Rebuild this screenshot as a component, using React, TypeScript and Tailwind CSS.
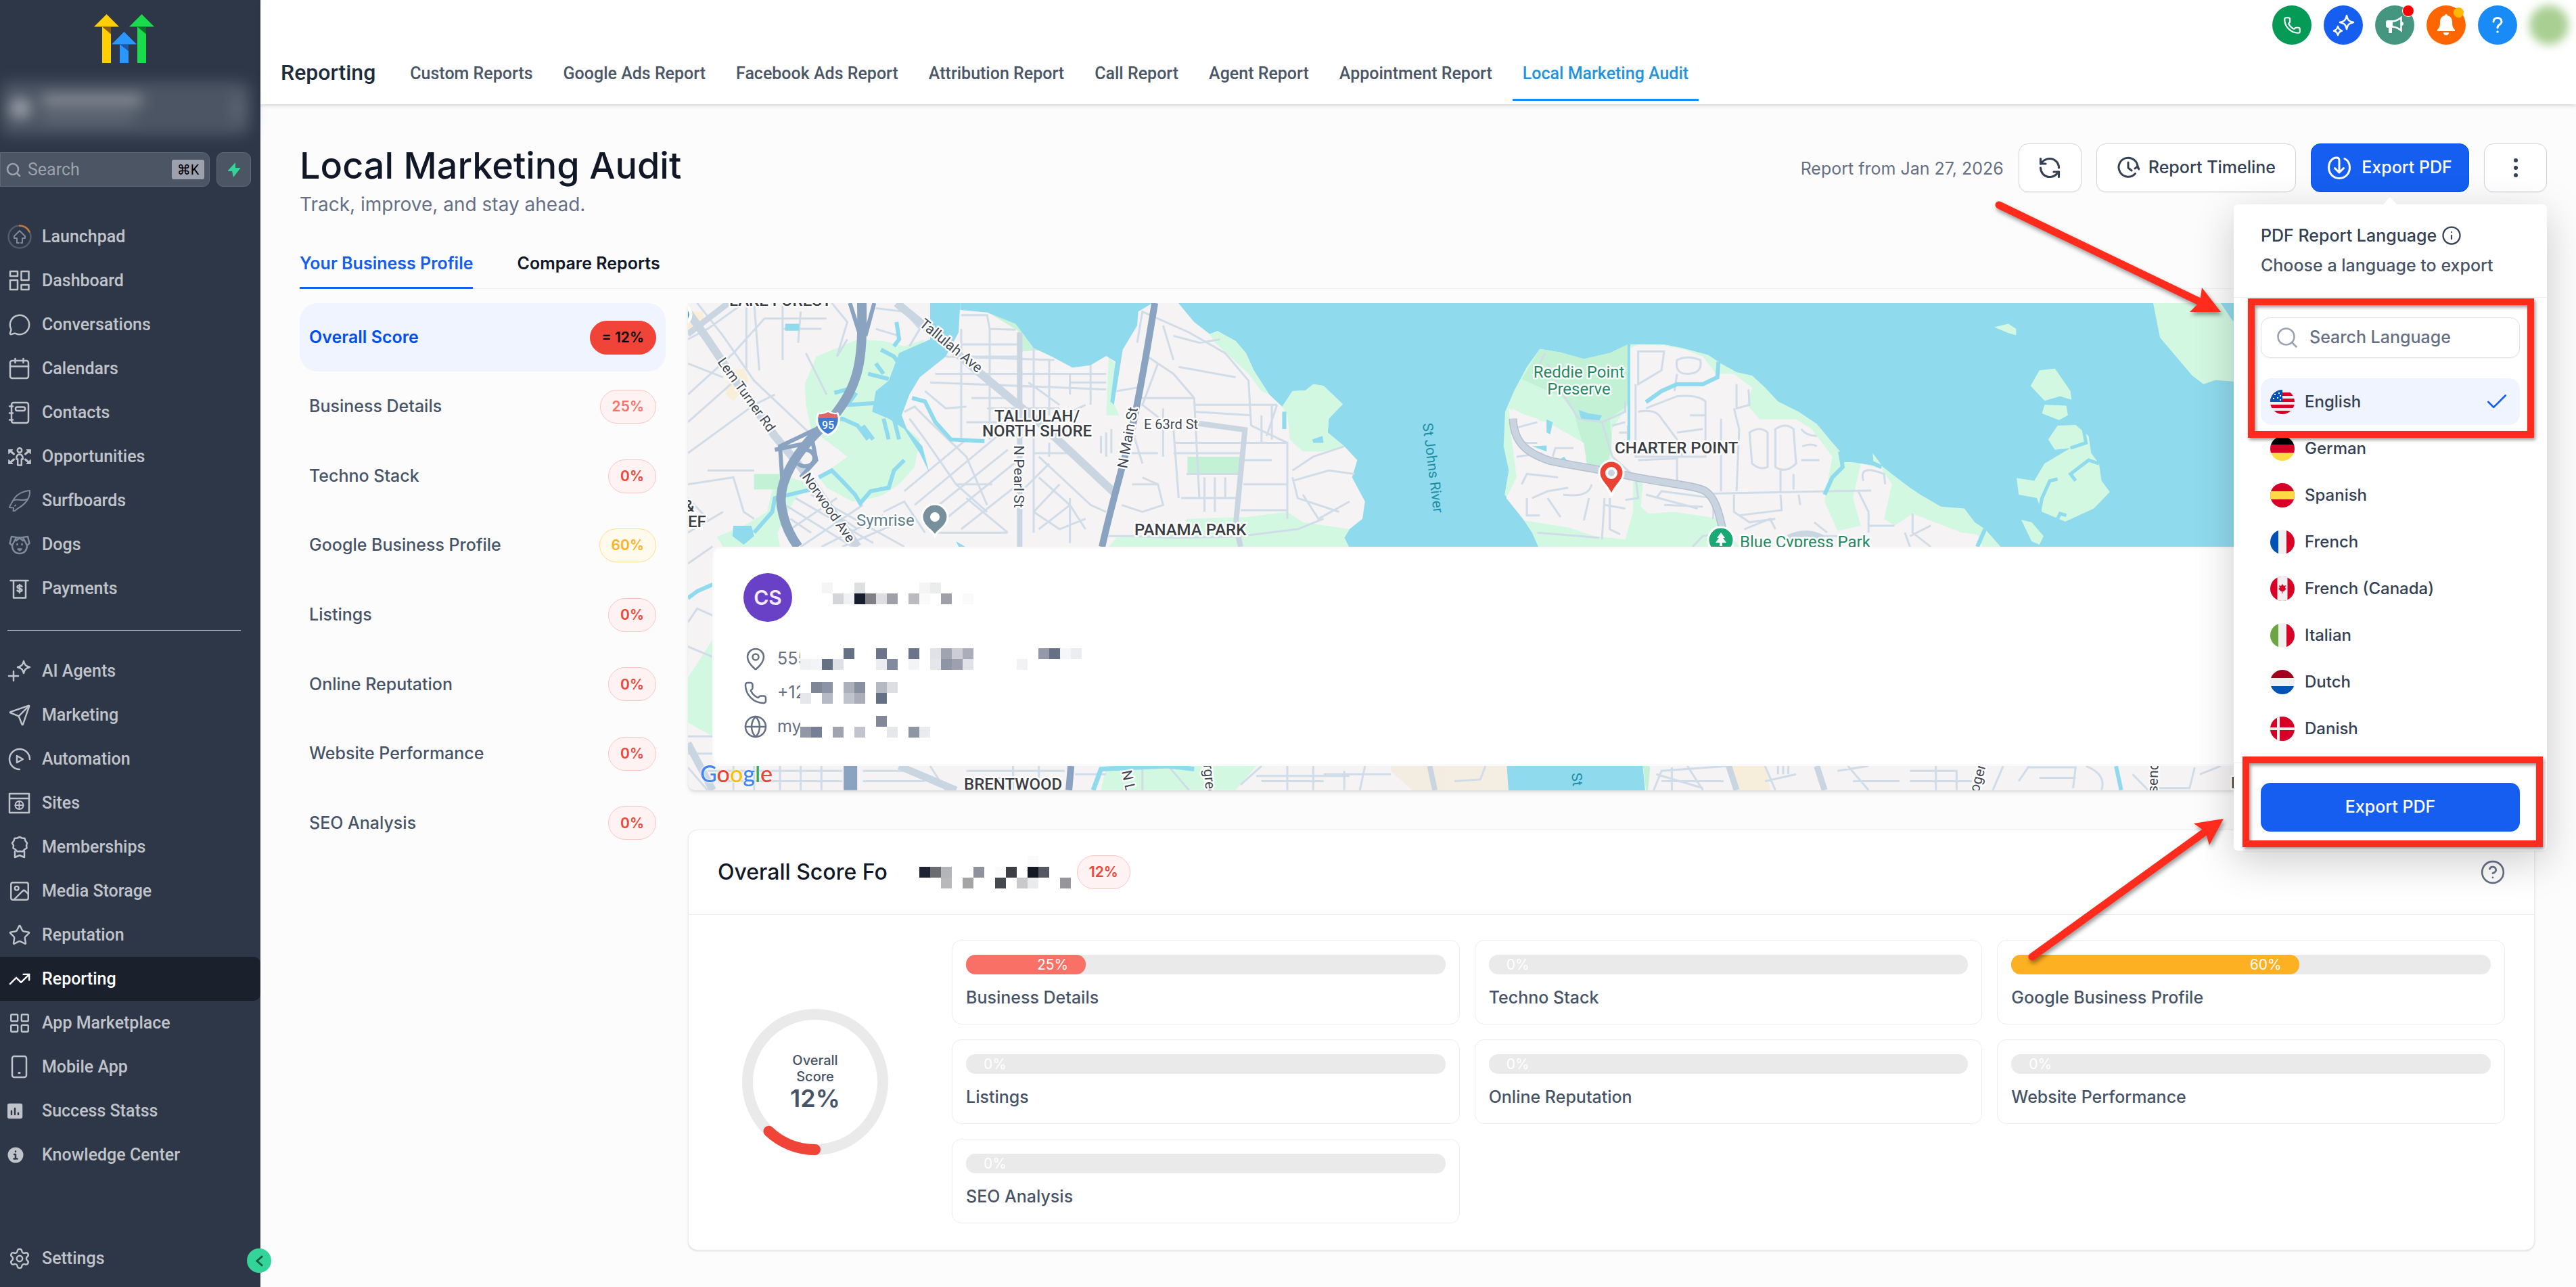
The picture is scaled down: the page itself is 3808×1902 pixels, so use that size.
import type { ReactNode } from 'react';
import clsx from 'clsx';
import {
  Check,
  CircleHelp,
  Globe,
  Image,
  Info,
  LayoutGrid,
  MapPin,
  MessageCircle,
  Phone,
  RefreshCw,
  Search,
  Send,
  Settings,
  Star,
  TrendingUp,
} from 'lucide-react';

//
// sidebar icons
//

interface GlyphProps {
  children: ReactNode;
  className?: string;
}

const Glyph = ({ children, className }: GlyphProps) => (
  <svg
    viewBox="0 0 36 36"
    className={clsx('size-9', className)}
    fill="none"
    stroke="currentColor"
    strokeWidth="2.5"
    strokeLinecap="round"
    strokeLinejoin="round"
    aria-hidden="true"
  >
    {children}
  </svg>
);

const LaunchpadIcon = () => (
  <Glyph className="text-[#7f8a99]">
    <circle cx="18" cy="18" r="16.5" stroke="#505b6b" />
    <path d="M18 1.5a16.5 16.5 0 0 1 14.5 9" stroke="#c27a3d" />
    <path d="m18 9-8 8v3h4v7h3M18 9l8 8v3h-4v7h-2" strokeWidth="2" />
  </Glyph>
);

const DashboardIcon = () => (
  <Glyph>
    <rect x="4" y="4" width="11" height="7" />
    <rect x="4" y="17" width="11" height="14" />
    <rect x="20.500" y="4" width="11" height="13" />
    <rect x="20.500" y="24" width="11" height="7" />
  </Glyph>
);

const CalendarIcon = () => (
  <Glyph>
    <rect x="4" y="6" width="27" height="26" rx="3" />
    <path d="M4 14.500h27M11.500 3v6M23.500 3v6" />
  </Glyph>
);

const ContactsIcon = () => (
  <Glyph>
    <rect x="6" y="3" width="25" height="30" rx="3" />
    <path d="M3 8.500h5M3 18.500h5M3 28.500h5" />
    <rect x="12" y="9.500" width="14" height="5.500" rx="2.500" />
  </Glyph>
);

const OpportunitiesIcon = () => (
  <Glyph>
    <circle cx="18" cy="8.500" r="3.200" />
    <path d="M18 14.500c-3.500 0-4.800 2-4.800 7h2v9h5.600v-9h2c0-5-1.300-7-4.800-7z" />
    <path d="M3 8.500 9.500 14M33 8.500 26.500 14M3 27.500 9.500 22M33 27.500 26.500 22" strokeWidth="3" />
    <path d="M2 7.500h6l-6 6zM34 7.500h-6l6 6zM2 28.500h6l-6-6zM34 28.500h-6l6-6z" fill="currentColor" strokeWidth="1" />
  </Glyph>
);

const SurfboardIcon = () => (
  <Glyph className="text-[#7f8a99]">
    <path d="M33 3C21 4 13 9 8 18c-2 4-4 6-5 10l6 .500-.500 4.500c3 .500 4-1.500 6-3C25 24 34 16 33 3z" strokeWidth="2" />
    <path d="M9 17.500c7-3 12 2 21-2M11 25.500l1-1" strokeWidth="2" />
  </Glyph>
);

const DogIcon = () => (
  <Glyph className="text-[#7f8a99]">
    <path d="M6 6 3.500 16 7 19c0 7 4 12 11 12s11-5 11-12l3.500-3L30 6c-4 0-6 1.500-12 1.500S10 6 6 6z" />
    <path d="M13 7.500 7 19M23 7.500 29 19M18 8l-5 4M18 8l5 4" />
    <path d="M14.500 17v1M21.500 17v1" />
    <path d="M15.500 24.500h5l-2.500 2z" fill="currentColor" />
  </Glyph>
);

const PaymentsIcon = () => (
  <Glyph>
    <path d="M4.500 6h26M9 6v25.500h18V6" />
    <path d="M21.500 15c-1.500-2.500-7-2-7 .500s7 2 7 4.500-5.500 3-7 .500M18 12v12" />
  </Glyph>
);

const AgentsIcon = () => (
  <Glyph>
    <path d="M24 3c1.500 6 3 7.500 9 9-6 1.500-7.500 3-9 9-1.500-6-3-7.500-9-9 6-1.500 7.500-3 9-9zM9 18v14M2 25h14" />
  </Glyph>
);

const AutomationIcon = () => (
  <Glyph>
    <path d="M18 33A15 15 0 1 1 33 18" />
    <path d="m14 13 9 5-9 5z" />
  </Glyph>
);

const SitesIcon = () => (
  <Glyph>
    <path d="M3 4h29v28H3zM3 11h29" />
    <circle cx="17.500" cy="21" r="6" strokeWidth="2" />
    <path d="M11.500 21h12M17.500 15v12" strokeWidth="2" />
  </Glyph>
);

const MembershipsIcon = () => (
  <Glyph>
    <path d="m18 3 3.500 1.500L25.500 5l1 3.500L29 12l-1 3.500.500 4-3.500 2-2.500 3-4-.500-4 .500-2.500-3-3.500-2 .500-4L7 12l2.500-3.500 1-3.500 4-.500z" />
    <path d="M11 24v9l7-3 7 3v-9" />
  </Glyph>
);

const MobileIcon = () => (
  <Glyph>
    <rect x="7" y="2" width="21" height="31" rx="3" />
    <path d="M17 26.500h1" strokeWidth="3" />
  </Glyph>
);

const StatsIcon = () => (
  <Glyph>
    <rect x="1" y="8" width="20" height="20" rx="2" fill="currentColor" />
    <path d="M6 18v5M11 14v9M16 21v2" stroke="#2e3748" />
  </Glyph>
);

const KnowledgeIcon = () => (
  <Glyph>
    <circle cx="12" cy="18" r="11.500" fill="currentColor" stroke="none" />
    <path d="M10 17h2v6M9.500 23.500h5M12 12.500v.500" stroke="#2e3748" />
  </Glyph>
);

//
// sidebar
//

interface NavEntry {
  label: string;
  icon: ReactNode;
  active?: boolean;
}

const lucide = 'mx-[1px] size-[34px] stroke-[1.700px]';

const primaryNav: NavEntry[] = [
  { label: 'Launchpad', icon: <LaunchpadIcon /> },
  { label: 'Dashboard', icon: <DashboardIcon /> },
  { label: 'Conversations', icon: <MessageCircle className={lucide} /> },
  { label: 'Calendars', icon: <CalendarIcon /> },
  { label: 'Contacts', icon: <ContactsIcon /> },
  { label: 'Opportunities', icon: <OpportunitiesIcon /> },
  { label: 'Surfboards', icon: <SurfboardIcon /> },
  { label: 'Dogs', icon: <DogIcon /> },
  { label: 'Payments', icon: <PaymentsIcon /> },
];

const secondaryNav: NavEntry[] = [
  { label: 'AI Agents', icon: <AgentsIcon /> },
  { label: 'Marketing', icon: <Send className={lucide} /> },
  { label: 'Automation', icon: <AutomationIcon /> },
  { label: 'Sites', icon: <SitesIcon /> },
  { label: 'Memberships', icon: <MembershipsIcon /> },
  { label: 'Media Storage', icon: <Image className={lucide} /> },
  { label: 'Reputation', icon: <Star className={lucide} /> },
  { label: 'Reporting', icon: <TrendingUp className={lucide} />, active: true },
  { label: 'App Marketplace', icon: <LayoutGrid className={lucide} /> },
  { label: 'Mobile App', icon: <MobileIcon /> },
  { label: 'Success Statss', icon: <StatsIcon /> },
  { label: 'Knowledge Center', icon: <KnowledgeIcon /> },
];

const NavLink = ({ label, icon, active }: NavEntry) => (
  <a
    href="#"
    aria-current={active ? 'page' : undefined}
    className={clsx(
      'flex h-[65px] items-center gap-[15px] pl-[11px] text-[25px] font-medium',
      active ? 'rounded-r-[10px] bg-[#1a202c] text-white' : 'text-[#c0c4ca]',
    )}
  >
    {icon}
    {label}
  </a>
);

const Logo = () => (
  <svg viewBox="0 0 89 72" className="mx-auto h-[72px] w-[89px]" role="img" aria-label="Logo">
    <path d="M0 18.500 18.500 0 37 18.500z" fill="#ffcf02" />
    <path d="M12 18.500h13V72H12z" fill="#ffcf02" />
    <path d="M12 18.500h13v11z" fill="#8a5d0c" />
    <path d="M52 18.500 70.500 0 89 18.500z" fill="#19db4b" />
    <path d="M64 18.500h13V72H64z" fill="#19db4b" />
    <path d="M64 18.500h13v11z" fill="#0b7024" />
    <path d="M26 44.500 44.500 26 63 44.500z" fill="#2a97ff" />
    <path d="M38 44.500h13V72H38z" fill="#2a97ff" />
    <path d="M38 44.500h13v10z" fill="#1a5aa6" />
  </svg>
);

const Sidebar = () => (
  <aside className="relative flex w-[385px] shrink-0 flex-col bg-[#2e3748] pt-[21px] pb-[10px] font-[Roboto,sans-serif]">
    <div className="mr-[18px]">
      <Logo />
    </div>

    <div className="mt-[27px] mr-[15px] flex h-20 items-center gap-4 rounded-2xl bg-[#4c5563] pl-[14px] blur-[10px]">
      <div className="size-8 rounded-full bg-[#9a9fa8]" />
      <div className="flex flex-col gap-3">
        <div className="h-4 w-[148px] bg-[#8d919b]" />
        <div className="h-3 w-[136px] bg-[#666e7a]" />
      </div>
      <div className="mr-3 ml-auto h-10 w-3 bg-[#626b78]" />
    </div>

    <div className="mt-[25px] flex h-[51px] gap-[10px]">
      <label className="flex w-[310px] items-center gap-[9px] rounded-r-[10px] border border-[#5f6876] bg-[#4c5563] pr-[7px] pl-[7px]">
        <Search className="size-6 shrink-0 stroke-[2.600px] text-[#9ca1ad]" />
        <input
          aria-label="Search"
          placeholder="Search"
          className="w-full min-w-0 bg-transparent text-[25px] placeholder:text-[#9ca1ad] focus:outline-none"
        />
        <kbd className="flex h-[29px] w-12 shrink-0 items-center justify-center rounded-[3px] bg-[#9ca1ad] font-[Roboto,'DejaVu_Sans',sans-serif] text-[20px] text-black">
          ⌘K
        </kbd>
      </label>
      <button
        type="button"
        aria-label="Quick actions"
        className="flex w-[51px] items-center justify-center rounded-[10px] border border-[#5f6876] bg-[#4c5563]"
      >
        <svg viewBox="0 0 18 22" className="h-[22px] w-[18px]" fill="#36d399">
          <path d="M11 0 0 12v1h6L8 22 18 9V8h-7z" />
        </svg>
      </button>
    </div>

    <nav aria-label="Main" className="mt-[41px]">
      {primaryNav.map((entry) => (
        <NavLink key={entry.label} {...entry} />
      ))}
    </nav>

    <hr className="mt-[29px] mr-[29px] ml-[11px] border-[#c5c9cf]" />

    <nav aria-label="Tools" className="mt-[27px]">
      {secondaryNav.map((entry) => (
        <NavLink key={entry.label} {...entry} />
      ))}
    </nav>

    <div className="mt-auto">
      <NavLink label="Settings" icon={<Settings className={lucide} />} />
    </div>

    <button
      type="button"
      aria-label="Collapse sidebar"
      className="absolute -right-4 bottom-[21px] flex size-9 items-center justify-center rounded-full bg-[#34d399]"
    >
      <svg viewBox="0 0 12 18" className="h-[17px] w-[11px]" fill="none" stroke="#0b5a43" strokeWidth="3">
        <path d="M11 1 2 9l9 8" />
      </svg>
    </button>
  </aside>
);

//
// header
//

const reportTabs = [
  'Custom Reports',
  'Google Ads Report',
  'Facebook Ads Report',
  'Attribution Report',
  'Call Report',
  'Agent Report',
  'Appointment Report',
  'Local Marketing Audit',
];

const roundButton = 'relative flex size-[58px] items-center justify-center rounded-full text-white';

const Header = () => (
  <header className="z-10 flex h-[154px] flex-col bg-white font-[Roboto,sans-serif] shadow-[0_2px_6px_rgba(0,0,0,0.16)]">
    <div className="flex justify-end gap-[18px] pt-2 pr-[11px]">
      <button type="button" aria-label="Call" className={clsx(roundButton, 'bg-[#059a55]')}>
        <Phone className="size-[27px] stroke-[1.900px]" />
      </button>
      <button type="button" aria-label="Assistant" className={clsx(roundButton, 'bg-[#155eef]')}>
        <svg viewBox="0 0 34 34" className="size-[34px]" fill="none" stroke="currentColor" strokeWidth="2.500" strokeLinejoin="round">
          <path d="M22 3c1.500 7 3.500 8.500 10 10-6.500 1.500-8.500 3-10 10-1.500-7-3.500-8.500-10-10 6.500-1.500 8.500-3 10-10zM9 19c1 4 2.500 5.500 6 6.500-3.500 1-5 2.500-6 6.500-1-4-2.500-5.500-6-6.500 3.500-1 5-2.500 6-6.500z" />
        </svg>
      </button>
      <button type="button" aria-label="Announcements" className={clsx(roundButton, 'bg-[#459680]')}>
        <svg viewBox="0 0 26 26" className="size-[26px]" fill="currentColor">
          <path d="M3 6h7v11H9v7a1 1 0 0 1-1 1H5a1 1 0 0 1-1-1v-7H3a3 3 0 0 1-3-3V9a3 3 0 0 1 3-3z" />
          <path d="M10 7.500C15 7 19 5 22.500 2v19C19 18 15 16 10 15.500" fill="none" stroke="currentColor" strokeWidth="2.500" />
          <path d="M23 8a3 3 0 0 1 0 6z" />
        </svg>
        <span className="absolute -top-[1px] right-0 size-[18px] rounded-full border border-white bg-[#ff0000]" />
      </button>
      <button type="button" aria-label="Notifications" className={clsx(roundButton, 'bg-[#ff6600]')}>
        <svg viewBox="0 0 28 32" className="h-8 w-7" fill="currentColor">
          <path d="M14 0a2 2 0 0 1 2 2c5 1 7 5 7 10 0 6 1 8 4 11v2H1v-2c3-3 4-5 4-11C5 7 7 3 12 2a2 2 0 0 1 2-2z" />
          <path d="M10 27h8a4 4 0 0 1-8 0z" />
        </svg>
        <span className="absolute top-[3px] right-[3px] size-[15px] rounded-full bg-[#ffb900]" />
      </button>
      <button type="button" aria-label="Help" className={clsx(roundButton, 'bg-[#188bf6]')}>
        <svg viewBox="0 0 16 24" className="h-6 w-4" fill="none" stroke="currentColor" strokeWidth="3" strokeLinecap="round">
          <path d="M2 7c0-3.500 2.500-5.500 6-5.500s6 2 6 5.500c0 4.500-6 4-6 9" />
          <path d="M8 22v.100" strokeWidth="3.500" />
        </svg>
      </button>
      <div className="size-[58px] rounded-full bg-[#a9cf92] blur-[7px]" />
    </div>

    <div className="flex h-[83px] gap-9 pl-[30px]">
      <h2 className="pt-[22px] text-[32px] leading-[38px] font-medium text-[#202b3c]">Reporting</h2>
      <nav aria-label="Reports" className="flex gap-[15px]">
        {reportTabs.map((tab, index) => (
          <a
            key={tab}
            href="#"
            className={clsx(
              'flex items-center border-b-3 px-[15px] pt-[6px] text-[25px] font-medium',
              index === reportTabs.length - 1 ? 'border-[#188bf6] text-[#2492dc]' : 'border-transparent text-[#4b5666]',
            )}
          >
            {tab}
          </a>
        ))}
      </nav>
    </div>
  </header>
);

//
// language menu
//

const flags: Record<string, ReactNode> = {
  English: (
    <>
      <path d="M0 0h36v36H0z" fill="#f0f0f0" />
      <path d="M0 4h36v5H0zM0 13h36v5H0zM0 22h36v5H0zM0 31h36v5H0z" fill="#d80027" />
      <path d="M0 0h18v18H0z" fill="#0052b4" />
      <path d="M6 6h2v2H6zM12 4h2v2h-2zM4 12h2v2H4zM10 11h2v2h-2zM14 8h2v2h-2zM14 14h2v2h-2z" fill="#f0f0f0" />
    </>
  ),
  German: (
    <>
      <path d="M0 0h36v12H0z" fill="#000" />
      <path d="M0 12h36v12H0z" fill="#d80027" />
      <path d="M0 24h36v12H0z" fill="#ffda44" />
    </>
  ),
  Spanish: (
    <>
      <path d="M0 0h36v36H0z" fill="#d80027" />
      <path d="M0 12h36v12H0z" fill="#ffda44" />
    </>
  ),
  French: (
    <>
      <path d="M0 0h12v36H0z" fill="#0052b4" />
      <path d="M12 0h12v36H12z" fill="#f0f0f0" />
      <path d="M24 0h12v36H24z" fill="#d80027" />
    </>
  ),
  'French (Canada)': (
    <>
      <path d="M0 0h36v36H0z" fill="#d80027" />
      <path d="M10.500 0h15v36h-15z" fill="#f0f0f0" />
      <path d="m18 11 2 3 3-1-1 4 2 1-4 4h-1.500v3h-1v-3H16l-4-4 2-1-1-4 3 1z" fill="#d80027" />
    </>
  ),
  Italian: (
    <>
      <path d="M0 0h12v36H0z" fill="#6da544" />
      <path d="M12 0h12v36H12z" fill="#f0f0f0" />
      <path d="M24 0h12v36H24z" fill="#d80027" />
    </>
  ),
  Dutch: (
    <>
      <path d="M0 0h36v12H0z" fill="#a2001d" />
      <path d="M0 12h36v12H0z" fill="#f0f0f0" />
      <path d="M0 24h36v12H0z" fill="#0052b4" />
    </>
  ),
  Danish: (
    <>
      <path d="M0 0h36v36H0z" fill="#d80027" />
      <path d="M10 0h4v36h-4zM0 16h36v4H0z" fill="#f0f0f0" />
    </>
  ),
};

const languages = ['English', 'German', 'Spanish', 'French', 'French (Canada)', 'Italian', 'Dutch', 'Danish'];

const Highlight = ({ className }: { className: string }) => (
  <div
    className={clsx(
      'pointer-events-none absolute border-10 border-[#ff2b1c] shadow-[2px_3px_5px_rgba(0,0,0,0.4),inset_2px_3px_5px_rgba(0,0,0,0.4)]',
      className,
    )}
  />
);

const LanguageMenu = () => (
  <div className="absolute top-[90px] -right-[115px] z-20 w-[463px] rounded-[6px] bg-white pb-[28px] shadow-[0_16px_60px_rgba(0,0,0,0.2)]">
    <svg viewBox="0 0 22 12" className="absolute -top-[11px] left-[220px] h-3 w-[22px]" fill="#fff">
      <path d="M11 0 22 12H0z" />
    </svg>

    <div className="border-b border-[#eceef1] px-10 pt-6 pb-[25px] text-[25px] leading-[44px]">
      <p className="flex items-center gap-[7px] font-medium text-[#344054]">
        PDF Report Language <Info className="size-[30px] stroke-[1.800px]" />
      </p>
      <p className="text-[#475467]">Choose a language to export</p>
    </div>

    <div className="px-10 pt-[29px]">
      <label className="flex h-[60px] items-center gap-[15px] rounded-[14px] border border-[#dfe1e6] pl-[20px] shadow-xs">
        <Search className="size-9 shrink-0 stroke-[1.700px] text-[#98a2b3]" />
        <input
          aria-label="Search Language"
          placeholder="Search Language"
          className="w-full min-w-0 bg-transparent text-[25px] placeholder:text-[#667085] focus:outline-none"
        />
      </label>

      <ul className="mt-[30px]">
        {languages.map((language, index) => (
          <li key={language}>
            <button
              type="button"
              aria-pressed={index === 0}
              className={clsx(
                'flex h-[69px] w-full items-center gap-[15px] rounded-[16px] pr-[15px] pl-[14px] text-[24px] font-medium text-[#344054]',
                index === 0 && 'bg-[#eff4ff]',
              )}
            >
              <svg viewBox="0 0 36 36" className="size-9 rounded-full" aria-hidden="true">
                {flags[language]}
              </svg>
              {language}
              {index === 0 && <Check className="ml-auto size-[38px] stroke-[1.700px] text-[#155eef]" />}
            </button>
          </li>
        ))}
      </ul>
    </div>

    <div className="mt-4 border-t border-[#eceef1] px-10 pt-[29px]">
      <button type="button" className="h-[72px] w-full rounded-[14px] bg-[#155eef] text-[25px] font-medium text-white">
        Export PDF
      </button>
    </div>

    <Highlight className="top-[139px] right-[19px] left-[21px] h-[206px]" />
    <Highlight className="right-[6px] bottom-[5px] left-[13px] h-[134px]" />
  </div>
);

//
// page title and actions
//

const outlineButton =
  'flex h-[72px] items-center justify-center rounded-[14px] border border-[#d0d5dd] bg-white text-[#344054] shadow-xs';

const TitleRow = () => (
  <div className="flex items-start justify-between">
    <div>
      <h1 className="text-[54px] leading-[66px] font-medium text-[#101828]">Local Marketing Audit</h1>
      <p className="mt-1 text-[28px] leading-10 text-[#667085]">Track, improve, and stay ahead.</p>
    </div>

    <div className="flex items-center gap-[22px] text-[25px] font-medium">
      <span className="pt-1 font-normal text-[#667085]">Report from Jan 27, 2026</span>
      <button type="button" aria-label="Refresh" className={clsx(outlineButton, 'w-[93px]')}>
        <RefreshCw className="size-[36px] -scale-x-100 stroke-[2.100px]" />
      </button>
      <button type="button" className={clsx(outlineButton, 'gap-[13px] px-[29px]')}>
        <svg viewBox="0 0 34 34" className="size-[34px]" fill="none" stroke="currentColor" strokeWidth="3" strokeLinecap="round" strokeLinejoin="round">
          <path d="M27.500 25.500A14 14 0 1 1 31 17" />
          <path d="M17 9v8l5 4M27 18l4-3 2 4" />
        </svg>
        Report Timeline
      </button>
      <div className="relative">
        <button
          type="button"
          aria-expanded="true"
          className="flex h-[72px] w-[234px] items-center justify-center gap-[16px] rounded-[14px] border border-[#004eeb] bg-[#155eef] text-white"
        >
          <svg viewBox="0 0 34 34" className="size-[34px]" fill="none" stroke="currentColor" strokeWidth="3" strokeLinecap="round" strokeLinejoin="round">
            <path d="M25 3.500C30 6 32.500 11 32.500 17a15.500 15.500 0 1 1-31 0C1.500 9 6 2 13 2c3 0 4 2 4 4v17M10.500 17.500 17 24l6.500-6.500" />
          </svg>
          Export PDF
        </button>
        <LanguageMenu />
      </div>
      <button type="button" aria-label="More" className={clsx(outlineButton, 'w-[93px]')}>
        <svg viewBox="0 0 6 28" className="h-7 w-[6px]" fill="currentColor">
          <circle cx="3" cy="3" r="3" />
          <circle cx="3" cy="14" r="3" />
          <circle cx="3" cy="25" r="3" />
        </svg>
      </button>
    </div>
  </div>
);

//
// score list
//

const toneStyles = {
  solid: 'border-[#f04438] bg-[#f04438] text-black',
  low: 'border-[#fac5c0] bg-[#fef3f2] text-[#f97066]',
  none: 'border-[#fac5c0] bg-[#fef3f2] text-[#f04438]',
  mid: 'border-[#fedf89] bg-[#fffaeb] text-[#fdb022]',
};

interface ScoreBadgeProps {
  label: string;
  tone: keyof typeof toneStyles;
}

const ScoreBadge = ({ label, tone }: ScoreBadgeProps) => (
  <span
    className={clsx(
      'flex h-[50px] items-center rounded-full border px-[17px] text-[21px] font-semibold',
      toneStyles[tone],
    )}
  >
    {label}
  </span>
);

const sections: { name: string; score: string; tone: keyof typeof toneStyles }[] = [
  { name: 'Overall Score', score: '= 12%', tone: 'solid' },
  { name: 'Business Details', score: '25%', tone: 'low' },
  { name: 'Techno Stack', score: '0%', tone: 'none' },
  { name: 'Google Business Profile', score: '60%', tone: 'mid' },
  { name: 'Listings', score: '0%', tone: 'none' },
  { name: 'Online Reputation', score: '0%', tone: 'none' },
  { name: 'Website Performance', score: '0%', tone: 'none' },
  { name: 'SEO Analysis', score: '0%', tone: 'none' },
];

const SectionList = () => (
  <ul className="flex h-[819px] w-[541px] shrink-0 flex-col justify-between">
    {sections.map((section, index) => (
      <li key={section.name}>
        <button
          type="button"
          className={clsx(
            'flex h-[101px] w-full items-center justify-between rounded-[26px] px-[14px] text-[25px]',
            index === 0 ? 'bg-[#eff4ff] font-semibold text-[#004eeb]' : 'font-medium text-[#475467]',
          )}
        >
          {section.name}
          <ScoreBadge label={section.score} tone={section.tone} />
        </button>
      </li>
    ))}
  </ul>
);

//
// map
//

const street = { fill: 'none', stroke: '#d0dce7', strokeWidth: 3 };
const avenue = { fill: 'none', stroke: '#c9d5e1', strokeWidth: 8 };
const highway = { fill: 'none', stroke: '#8aa3c1', strokeWidth: 13 };

const halo = { paintOrder: 'stroke', stroke: '#fff', strokeWidth: 5, strokeLinejoin: 'round' } as const;

const WestShore = () => (
  <g transform="translate(-17 -18) scale(0.7653 0.5102)" className="[&_path]:[vector-effect:non-scaling-stroke]">
    <path d="M0 0H950L1000 90 1030 125 1045 116 1080 145 1100 180 1115 230 1145 300 1170 335 1190 290 1215 288 1230 270 1250 275 1287 328 1260 370 1258 410 1290 450 1315 490 1305 540 1330 610 1325 660 1300 690 1290 715 1300 745V1360H1603V1500H0Z" fill="#f5f3f4" />

    {/* parks */}
    <path d="M270 190 350 140 400 145 440 160 480 140 440 260 380 330 440 390 470 430 460 510 430 560 400 590 380 600 340 610 290 570 275 540 330 480 260 400 250 330 248 270Z" fill="#d3f8e2" />
    <path d="M150 530 200 530 260 560 230 600 215 640 195 700 200 741 90 741 78 712 130 680 175 640 185 575 150 575Z" fill="#d3f8e2" />
    <path d="M150 530H200V575H150Z" fill="#c3f1d5" />
    <path d="M605 65 655 92 700 172 665 175 660 115Z" fill="#c9f3d9" />
    <path d="M1030 125 1045 116 1080 145 1100 180 1115 230 1145 300 1130 290 1105 240 1070 190 1040 150Z" fill="#d3f8e2" />
    <path d="M1170 335 1190 290 1215 288 1230 270 1250 275 1287 328 1260 370 1258 410 1290 450 1250 465 1210 465 1185 430 1180 360Z" fill="#d3f8e2" />
    <path d="M987 480H1088V530H987Z" fill="#c3f1d5" />
    <path d="M835 190 850 215 840 310 855 360 830 360Z" fill="#d3f8e2" />
    <path d="M835 741 850 715 980 700 985 660 1100 655 1180 640 1210 670 1300 690 1290 715 1300 745Z" fill="#d3f8e2" />
    <path d="M22 1120 70 1010V1290L22 1250Z" fill="#d3f8e2" />
    <path d="M820 1446 830 1376H1120L1080 1446Z" fill="#d3f8e2" />
    <path d="M1380 1360H1603V1500H1460L1380 1390Z" fill="#f2ede0" />
    <path d="M22 60 50 60 55 100 22 130ZM100 230 130 225 140 260 110 320 95 300Z" fill="#f9efd9" />

    {/* street grid */}
    <path
      {...street}
      d="M40 35 90 130 150 260 270 430M130 35 60 110 22 140M135 35V230M205 35V200M205 110H280M150 35 160 230M240 60 235 150M22 300 110 180 170 80 290 80M22 380 120 250M22 470 150 330 190 300M22 210 90 250M60 520H150M22 560 110 540 130 640 150 660M22 600 60 660M22 700 90 640M250 180 270 240 290 300M300 35 330 90 310 190 330 140M385 50 440 60 470 110 450 160M385 110 430 130"
    />
    <path
      {...street}
      d="M550 70H600L605 110 655 112M550 110V430M550 155H660M550 190H660M605 110V430M690 120V700M520 190 730 200M500 240H830M490 265 830 285M480 290 520 340 560 335M720 200V360M760 240V300M800 215V330M760 265H830M570 310H640M600 340H740M680 265 740 330M720 380 790 330M560 380 640 380"
    />
    <path
      {...street}
      d="M440 350 460 335 490 380 560 480 600 620M450 370 480 430 540 560 600 640M490 640 640 460M520 660 660 490M550 690 660 560M460 620 620 420M440 580 560 430M500 700 640 700M400 640 440 610 480 700M560 600 640 700M540 560 610 560M700 480 800 620 830 640M700 540 760 620 790 690M720 500 660 590M740 560 690 640M760 600V730M700 690 760 620M690 640 740 690 790 660M690 470H760M820 420V470M830 410V480M840 400V470M720 440V480"
    />
    <path
      {...street}
      d="M890 150 900 60 990 120 1060 180 1105 260 1110 390M910 190 960 240 1000 310 1010 600M940 100 960 200M960 130 1010 150 1050 140M970 220 1080 250M930 210 900 330 960 400 970 600M890 280 850 290M890 310H1000M1000 330H1160M1000 350 1110 360M940 340V480M960 440H1180M960 470H1090M985 530H1090M975 600H1085M1110 390 1180 440V660M1130 360V440M1150 330V430M1160 330 1140 420M1190 520 1230 480 1290 450M1190 550 1260 520 1310 530M1210 590 1240 660 1300 610M1190 540 1200 600 1280 640M880 400 900 500M900 540 930 560 940 620 900 640 860 620M880 560H930M870 470H930M1020 540V640M1040 540V640M1060 540V600M1090 490H1150M1095 560H1180M1090 635H1180M820 710H880L960 715 1080 712 1200 690 1250 660"
    />
    <path
      {...street}
      d="M210 620 340 741M230 600 380 730M260 590 440 741M210 700 310 600M240 741 360 620M280 741 400 650M320 741 430 670M220 660 260 700M300 640 350 690M22 790 70 740M22 960 40 920 70 940M22 1030 70 1060M22 1290H70M22 1340H70M22 1380 60 1446M60 1390H320M80 1420H320M110 1376V1446M150 1376V1446M200 1376V1446M240 1376V1446M280 1376V1446M360 1390H440M360 1420H480M490 1376 520 1446M560 1390H750M560 1410H650M650 1376V1446M700 1376V1446M770 1400H830M900 1376V1446M950 1376 990 1446M1090 1430 1130 1376M1130 1420H1250M1180 1376V1446M1230 1376V1446M1250 1400H1380M1330 1376 1320 1446M1290 1390V1446M1120 1405H1300"
    />

    {/* creeks */}
    <path d="M490 35H548L545 120 520 190 470 250 450 300 435 360 445 400 475 450 488 525 470 470 440 400 410 370 378 350 385 290 410 260 430 180 490 140Z" fill="#90daee" />
    <path
      d="M425 90 430 140 420 160M395 170 420 190 430 210M385 210 400 240M370 240 410 255M305 295 330 285 345 300 330 330 385 325M300 380 320 370 350 390 370 430M360 390 380 430M400 370 410 430M420 370 430 430M455 310 480 320 500 380 530 430 595 435M275 540 300 520 320 550 345 590 355 615 375 580 410 570 420 520 440 490M150 700 185 640 190 600 260 575M22 890 40 870 70 850"
      fill="none"
      stroke="#90daee"
      strokeWidth="6"
    />
    <path d="M210 95H237V115H210ZM110 680 145 680 150 710 130 735 108 710ZM1228 430 1248 420 1250 440 1230 440ZM1170 350 1178 350 1178 400 1170 400ZM540 725 558 741H545Z" fill="#90daee" />
    <path d="M548 35V55L600 62 655 95 690 165 725 190 765 222 800 215 830 188 848 205 838 320 845 330 862 170 890 100 892 60 925 30Z" fill="#90daee" />
    <path d="M805 1446 820 1385 950 1376 1000 1385" fill="none" stroke="#90daee" strokeWidth="7" />

    {/* arterials */}
    <path {...avenue} strokeWidth="12" d="M425 35 470 90 580 230 700 380 850 590" />
    <path {...avenue} strokeWidth="12" d="M22 60 60 140 100 230 190 420 240 510 350 741" />
    <path {...avenue} strokeWidth="9" d="M100 35 22 125" />
    <path {...avenue} d="M663 120V741M1000 382 1098 402 1080 680 1090 741" />
    <path {...avenue} strokeWidth="11" d="M430 1376 540 1446M22 1310 70 1446" />
    <path {...avenue} d="M1455 1376 1465 1446" />
    <path {...highway} strokeWidth="6" d="M335 35 355 130M382 35 365 130M270 400 200 450 205 560M262 430 270 490 240 540M255 440 190 460M250 460A18 24 0 1 1 235 500" />
    <path {...highway} strokeWidth="14" d="M358 35C360 200 355 270 300 370 230 460 190 560 205 640 210 680 220 710 235 741" />
    <path {...highway} strokeWidth="10" d="M924 35C910 160 900 260 880 400 860 520 840 620 822 741M762 1376 758 1446" />
    <path {...highway} strokeWidth="20" d="M336 1376V1446" />
  </g>
);

const EastShore = () => (
  <g transform="translate(1133 -18) scale(0.7653 0.5102)" className="[&_path]:[vector-effect:non-scaling-stroke]">
    <path d="M165 168 205 178 250 197 300 180 335 155 405 155 440 165 490 185 515 210 545 235 575 245 600 280 625 320 665 350 700 385 725 430 745 465 745 490 785 500 810 505 808 470 828 510 845 530 880 570 900 590 940 625 985 630 1005 670 1025 690 1055 741H162L150 700 128 650 97 590 105 520 95 450 98 350 115 290 140 220Z" fill="#d3f8e2" />
    <path d="M165 168 205 178 250 197 300 180 335 155V330L300 370 305 450 290 520 245 500 255 480 230 350 210 310 130 255Z" fill="#c3f1d5" />
    <path d="M340 165 355 155 405 158 445 170 480 190 505 240 540 240 575 280 565 330 590 372 660 372 690 400 715 450 730 480 720 560 715 610 740 695 785 680 770 600 785 500 825 515 845 560 830 660 850 680 885 645 980 700 1010 705 1020 741H550L515 660 425 640 375 645 360 625 365 545 345 540 345 640 330 720 270 710 220 685 135 665 100 600 120 540 110 420 105 340 130 365 180 380 250 440 255 500 300 520 305 400 340 320Z" fill="#f5f3f4" />
    <path d="M112 340 130 355 160 370 185 415 245 440 255 495 200 495 140 460 110 380Z" fill="#f5f3f4" />

    <path
      {...street}
      d="M355 175H405L400 230 355 270ZM430 200Q450 185 475 200 480 240 450 240 425 240 430 200ZM430 240 425 290M350 270V480H485V320Q470 300 430 305L370 340M355 350Q390 340 400 370L430 430 440 480M485 360 455 360M430 410 480 400M515 370V580M550 400 545 580M545 270V340L570 330 568 285M540 340 550 400M570 410Q590 390 605 410V510Q590 520 575 500ZM620 400Q640 380 655 400L660 500Q640 530 620 510ZM630 520V580M655 530V575M670 400Q680 420 700 420M672 450Q690 440 700 450M670 490 705 490"
    />
    <path
      {...street}
      d="M355 490 430 485V560M500 587 720 580 805 578M790 550Q780 500 830 530L832 560M540 590V640L570 670 620 660M550 650 632 635 630 590M560 690 610 660 620 690M665 590 668 620M780 580 800 640V700M800 680H850M885 645V700L920 741M880 710 920 680M150 600 180 580 220 570M130 560 140 530 200 540M140 600 140 650 165 650M180 600 205 655M210 590Q260 600 265 560M260 600 250 665M290 600 285 720M290 620 330 630M300 600 300 690 320 705M285 380 305 480 350 540 355 600 330 605M370 590 470 630M390 600 400 580 500 600M430 570 440 550M405 620 480 625M120 440 160 440M120 480 170 470M190 480 195 455 230 455M160 700 280 715M110 400 160 380M335 390V440M305 390 330 380M318 410H335M650 710 760 710M695 670 720 700M880 741 870 700"
    />
    <path {...street} d="M165 210 175 180M180 210 210 300 240 370 285 380 330 350V320M500 620V660M460 741 480 710 520 700" />
    <path d="M337 155V440" stroke="#90daee" strokeWidth="4" />
    <path
      d="M510 205 508 250 480 270 430 270 400 290 370 322M745 465 750 510 730 540 715 590M745 490 785 490 810 500 825 510M1025 690 1010 741"
      fill="none"
      stroke="#90daee"
      strokeWidth="6"
    />
    <path d="M240 345 260 355 285 360 280 375 245 370ZM178 372 190 380 185 415 178 410ZM150 450 178 448V465ZM200 490 212 480 220 497 205 500Z" fill="#90daee" />

    <path d="M113 370C115 440 140 470 185 492 260 515 300 520 340 537 420 560 470 565 485 580 505 600 512 650 518 690" fill="none" stroke="#b3c0cf" strokeWidth="12" />
    <path d="M113 370C115 440 140 470 185 492 260 515 300 520 340 537 420 560 470 565 485 580 505 600 512 650 518 690" fill="none" stroke="#c9d4e0" strokeWidth="9" />
    <path {...avenue} strokeWidth="9" d="M645 715Q680 690 710 715" />

    {/* marsh islands */}
    <path d="M1043 105 1070 95 1085 110V128L1070 122Z" fill="#d3f8e2" />
    <path d="M1113 275 1130 230 1160 225 1190 290 1192 315 1170 305 1140 318Z" fill="#d3f8e2" />
    <path d="M1135 355 1140 330 1182 332 1185 360 1168 374Z" fill="#d3f8e2" />
    <path d="M1147 430 1165 390 1200 388 1225 420 1230 470 1245 500 1250 550 1266 582 1235 630 1180 668 1135 640 1125 600 1090 590 1086 542 1120 550 1140 500 1190 455 1160 460Z" fill="#d3f8e2" />
    <path d="M1095 663 1115 670 1138 710 1130 735 1115 725Z" fill="#d3f8e2" />
    <path d="M1349 30H1478L1505 90V262L1470 258 1447 270 1425 245 1363 135Z" fill="#d3f8e2" />
    <path d="M1215 400 1220 440 1190 455M1245 500 1225 490 1190 530 1200 550M1165 545 1150 550 1135 600 1130 640M1165 660 1170 645 1182 650" fill="none" stroke="#90daee" strokeWidth="5" />

    {/* south bank */}
    <path d="M-20 1350H100L107 1500H-20Z" fill="#f4eee2" />
    <path d="M362 1350H2100V1500H372Z" fill="#f5f3f4" />
    <path d="M362 1350 378 1380 374 1446H370Z" fill="#c3f1d5" />
    <path d="M535 1376H602L610 1446H550Z" fill="#f6eedb" />
    <path
      {...street}
      d="M0 1420 50 1415 60 1376M385 1446 400 1390 530 1376M390 1400 480 1440M420 1380V1446M450 1376 480 1446M400 1420H520M600 1376 620 1446M625 1376V1400M635 1376V1400M645 1376V1400M600 1420 660 1400M760 1376 800 1446M740 1390 800 1376M770 1420H860M880 1390H970V1446M930 1376V1446M880 1420H1000M1060 1376 1040 1446M1110 1380H1200L1195 1440M1090 1420 1110 1376M1220 1376Q1260 1400 1250 1446M1130 1410H1200M1310 1400 1340 1446M1360 1440 1420 1440 1430 1380M1440 1400 1480 1376"
    />
    <path {...avenue} strokeWidth="9" d="M530 1376 545 1446M700 1376 715 1446" />
    <path d="M1278 1376 1288 1446" stroke="#90daee" strokeWidth="6" />
  </g>
);

const MapLabels = () => (
  <g fontFamily="Roboto, sans-serif" fontSize="24" fontWeight="500" fill="#3a3e44" {...halo}>
    <text x="61" y="4">LAKE FOREST</text>
    <g textAnchor="middle">
      <text x="516" y="175">TALLULAH/</text>
      <text x="516" y="197">NORTH SHORE</text>
    </g>
    <text x="660" y="343">PANAMA PARK</text>
    <text x="1370" y="222">CHARTER POINT</text>
    <text x="408" y="719">BRENTWOOD</text>
    <text x="0" y="331">EF</text>
    <text x="-6" y="308">&amp;</text>
    <text x="2281" y="717">N</text>

    <g fontSize="21" fontWeight="400" fill="#3f4753">
      <text x="674" y="186" fontSize="20">E 63rd St</text>
      <text transform="translate(649 245) rotate(-80)">N Main St</text>
      <text transform="translate(482 210) rotate(90)">N Pearl St</text>
      <text transform="translate(341 33) rotate(39)">Tallulah Ave</text>
      <text transform="translate(43 87) rotate(54)" fontSize="20">Lem Turner Rd</text>
      <text transform="translate(168 257) rotate(55)" fontSize="20">Norwood Ave</text>
      <text transform="translate(641 692) rotate(78)">N L</text>
      <text transform="translate(762 682) rotate(85)">rgree</text>
      <text transform="translate(1908 724) rotate(-75)">oger</text>
      <text transform="translate(2172 724) rotate(-88)">send</text>
    </g>

    <text x="249" y="329" fontWeight="400" fill="#5f7c8a">Symrise</text>

    <g fill="#1f8a62" fontWeight="400">
      <text x="1317" y="110" textAnchor="middle">Reddie Point</text>
      <text x="1317" y="135" textAnchor="middle">Preserve</text>
      <text x="1555" y="361">Blue Cypress Park</text>
    </g>

    <g fill="#1c8fa3" fontSize="21" fontWeight="400" stroke="none">
      <text transform="translate(1086 178) rotate(83)">St Johns River</text>
      <text transform="translate(1306 695) rotate(83)">St</text>
    </g>
  </g>
);

const MapPins = () => (
  <g>
    <circle cx="-10" cy="17" r="14" fill="#1a8cff" stroke="#fff" strokeWidth="5" />

    {/* interstate shield */}
    <path d="M193 163q7 2 14-3 7 5 14 3 4 8 1 16-3 11-15 16-12-5-15-16-3-8 1-16z" fill="#3b7bd6" stroke="#fff" strokeWidth="3" />
    <path d="M194 164q7 1 13-3 6 4 13 3l2 6h-30z" fill="#e06666" />
    <text x="207" y="186" textAnchor="middle" fontFamily="Roboto, sans-serif" fontSize="16" fontWeight="500" fill="#fff">
      95
    </text>

    <path d="M365 344c-3-8-19-14-19-28a19 19 0 0 1 38 0c0 14-16 20-19 28z" fill="#78909c" stroke="#fff" strokeWidth="3" />
    <circle cx="365" cy="316" r="7" fill="#fff" />

    <path d="M1365 285c-3-14-18-21-18-34a18 18 0 0 1 36 0c0 13-15 20-18 34z" fill="#ea4335" stroke="#fff" strokeWidth="3" />
    <circle cx="1365" cy="251" r="7" fill="#c9d4e0" stroke="#fff" strokeWidth="4" />

    <circle cx="1527" cy="350" r="19" fill="#1aa874" stroke="#fff" strokeWidth="3" />
    <path d="m1527 339 6 8h-3l5 7h-6v5h-4v-5h-6l5-7h-3z" fill="#fff" />
  </g>
);

interface MosaicProps {
  cols: number;
  rows: number;
  cells: [number, number, string][];
}

// redacted text: 16px blocks given as [column, row, colour]
const Mosaic = ({ cols, rows, cells }: MosaicProps) => (
  <svg width={cols * 16} height={rows * 16} className="shrink-0" shapeRendering="crispEdges" aria-hidden="true">
    {cells.map(([col, row, color]) => (
      <rect key={`${col}-${row}`} x={col * 16} y={row * 16} width="16" height="16" fill={color} />
    ))}
  </svg>
);

const nameCells: MosaicProps['cells'] = [
  [0, 0, '#f5f5f6'], [3, 0, '#dde0e1'], [9, 0, '#f5f5f6'], [10, 0, '#ebecec'],
  [1, 1, '#d4d5d9'], [2, 1, '#f0f1f3'], [3, 1, '#161d2e'], [4, 1, '#808086'], [5, 1, '#dedee2'],
  [6, 1, '#a0a0a8'], [8, 1, '#bababf'], [9, 1, '#fafafa'], [11, 1, '#a0a0a8'], [13, 1, '#fafafb'],
];

const addressCells: MosaicProps['cells'] = [
  [4, 0, '#667085'], [7, 0, '#6b748b'], [10, 0, '#6b748b'], [12, 0, '#e1e2e7'], [13, 0, '#a0a3b0'],
  [14, 0, '#cccdd5'], [15, 0, '#abaeba'], [22, 0, '#9399a8'], [23, 0, '#667085'], [24, 0, '#f4f6f8'], [25, 0, '#ecedf0'],
  [0, 1, '#f0f1f3'], [1, 1, '#f2f4f7'], [2, 1, '#667085'], [3, 1, '#dfe0e6'], [7, 1, '#ecedf0'],
  [8, 1, '#828aa0'], [10, 1, '#f3f4f6'], [12, 1, '#e5e6ea'], [13, 1, '#8e96a6'], [14, 1, '#9ea0af'],
  [15, 1, '#e1e2e7'], [20, 1, '#f2f2f4'],
];

const phoneCells: MosaicProps['cells'] = [
  [1, 0, '#7f8797'], [2, 0, '#8c93a4'], [4, 0, '#abb0ba'], [5, 0, '#888fa1'], [7, 0, '#b5b9c2'], [8, 0, '#dddee2'],
  [0, 1, '#e6e7eb'], [2, 1, '#b5bac6'], [4, 1, '#bfc3cc'], [5, 1, '#abadb8'], [7, 1, '#667085'],
];

const webCells: MosaicProps['cells'] = [
  [7, 0, '#80889a'], [0, 1, '#9297a8'], [1, 1, '#777f94'], [3, 1, '#a0a4b0'], [5, 1, '#c1c4cd'],
  [8, 1, '#e6e7eb'], [10, 1, '#8e96a6'], [11, 1, '#eaebee'],
];

const titleCells: MosaicProps['cells'] = [
  [10, 0, '#fafafa'], [0, 1, '#1e2434'], [1, 1, '#6b6b72'], [2, 1, '#b4b5b9'], [5, 1, '#8f919c'], [7, 1, '#fafafa'],
  [8, 1, '#3c3d45'], [10, 1, '#131825'], [11, 1, '#555862'], [2, 2, '#b8b8ba'], [4, 2, '#a5a5a6'],
  [7, 2, '#46484f'], [9, 2, '#c9c9cb'], [10, 2, '#eaebec'], [13, 2, '#97979b'],
];

const contacts = [
  { icon: <MapPin className="size-9 stroke-[1.700px]" />, text: '5555', cols: 26, cells: addressCells },
  { icon: <Phone className="size-9 stroke-[1.700px]" />, text: '+120', cols: 9, cells: phoneCells },
  { icon: <Globe className="size-9 stroke-[1.700px]" />, text: 'my', cols: 12, cells: webCells },
];

const googleLetters = [
  ['G', 'text-[#4285f4]'],
  ['o', 'text-[#ea4335]'],
  ['o', 'text-[#fbbc05]'],
  ['g', 'text-[#4285f4]'],
  ['l', 'text-[#34a853]'],
  ['e', 'text-[#ea4335]'],
];

const BusinessMap = () => (
  <section aria-label="Business location" className="relative h-[720px] overflow-hidden rounded-b-[10px] bg-[#90daee] shadow-md">
    <svg viewBox="0 0 2730 720" preserveAspectRatio="xMinYMin slice" className="h-full w-full" aria-hidden="true">
      <WestShore />
      <EastShore />
      <MapLabels />
      <MapPins />
    </svg>

    <div className="absolute bottom-0 left-[18px] font-[Lato,sans-serif] text-[34px] leading-[50px] font-medium [text-shadow:0_0_3px_#fff,0_0_3px_#fff]">
      {googleLetters.map(([letter, color], index) => (
        <span key={index} className={color}>
          {letter}
        </span>
      ))}
    </div>

    <div className="absolute inset-x-9 bottom-9 flex h-[324px] flex-col rounded-[12px] border-3 border-[#f9fafb] bg-white px-[43px] pt-[36px] text-[#667085]">
      <div className="flex items-start gap-[44px]">
        <span className="flex size-[72px] items-center justify-center rounded-full bg-[#6941c6] text-[30px] font-semibold text-[#f4ebff]">
          CS
        </span>
        <div className="pt-[14px]">
          <Mosaic cols={14} rows={2} cells={nameCells} />
        </div>
      </div>
      <ul className="mt-[30px]">
        {contacts.map(({ icon, text, cols, cells }) => (
          <li key={text} className="flex h-[50px] items-center text-[25px]">
            {icon}
            <span className="ml-[14px] w-[34px] overflow-hidden whitespace-nowrap">{text}</span>
            <Mosaic cols={cols} rows={2} cells={cells} />
          </li>
        ))}
      </ul>
    </div>
  </section>
);

//
// overall score
//

const scoreCards = [
  { name: 'Business Details', value: 25, color: 'bg-[#f97066]' },
  { name: 'Techno Stack', value: 0, color: '' },
  { name: 'Google Business Profile', value: 60, color: 'bg-[#fdb022]' },
  { name: 'Listings', value: 0, color: '' },
  { name: 'Online Reputation', value: 0, color: '' },
  { name: 'Website Performance', value: 0, color: '' },
  { name: 'SEO Analysis', value: 0, color: '' },
];

const ringLength = 2 * Math.PI * 100;

const ScoreRing = () => (
  <div className="relative size-[216px] shrink-0">
    <svg viewBox="0 0 216 216" className="size-full" fill="none" strokeWidth="16" aria-hidden="true">
      <circle cx="108" cy="108" r="100" stroke="#eaeaea" />
      <circle
        cx="108"
        cy="108"
        r="100"
        stroke="#f04438"
        strokeLinecap="round"
        strokeDasharray={`${ringLength * 0.12} ${ringLength}`}
        transform="rotate(90 108 108)"
      />
    </svg>
    <div className="absolute inset-0 flex flex-col items-center justify-center text-[#475467]">
      <span className="text-[20px] leading-6 font-medium">Overall</span>
      <span className="text-[20px] leading-6 font-medium">Score</span>
      <span className="text-[36px] leading-10 font-semibold">12%</span>
    </div>
  </div>
);

const OverallScore = () => (
  <section className="mt-[58px] rounded-[14px] border border-[#eaecf0] bg-white shadow-sm">
    <div className="flex h-[125px] items-center border-b border-[#eaecf0] pr-[42px] pl-[43px]">
      <h2 className="text-[32px] font-medium text-[#101828]">Overall Score Fo</h2>
      <div className="mr-[9px] ml-[47px]">
        <Mosaic cols={14} rows={3} cells={titleCells} />
      </div>
      <ScoreBadge label="12%" tone="none" />
      <CircleHelp className="ml-auto size-[38px] stroke-[1.700px] text-[#667085]" />
    </div>

    <div className="flex items-center gap-[94px] pt-[37px] pr-[43px] pb-[39px] pl-[79px]">
      <ScoreRing />
      <ul className="grid flex-1 grid-cols-3 gap-[22px]">
        {scoreCards.map((card) => (
          <li key={card.name} className="rounded-[14px] border border-[#eceded] px-[20px] pt-[21px] pb-[21px]">
            <div className="h-[29px] rounded-[14px] bg-[#eaeaea]">
              <div
                className={clsx(
                  'flex h-full w-fit items-center justify-end rounded-[14px] px-[26px] text-[21px] text-white',
                  card.color,
                )}
                style={card.value ? { width: `${card.value}%` } : undefined}
              >
                {card.value}%
              </div>
            </div>
            <p className="mt-4 text-[25px] leading-9 font-medium text-[#475467]">{card.name}</p>
          </li>
        ))}
      </ul>
    </div>
  </section>
);

//
// callout arrows pointing at the language menu
//

const CalloutArrows = () => (
  <svg
    viewBox="2940 290 360 1150"
    className="pointer-events-none absolute top-[290px] right-[508px] z-30 h-[1150px] w-[360px] drop-shadow-[2px_4px_3px_rgba(0,0,0,0.4)]"
    fill="#ff2b1c"
    stroke="#ff2b1c"
    aria-hidden="true"
  >
    <path d="M2955 303 3252 446" strokeWidth="11" strokeLinecap="round" />
    <path d="M3283 461 3255 425 3252 446 3237 461Z" stroke="none" />
    <path d="M3004 1414 3260 1229" strokeWidth="11" strokeLinecap="round" />
    <path d="M3287 1210 3243 1217 3260 1229 3266 1249Z" stroke="none" />
  </svg>
);

export default function App() {
  return (
    <div className="relative flex min-h-screen bg-[#fcfcfd] font-[Inter,sans-serif]">
      <Sidebar />

      <div className="flex min-w-0 flex-1 flex-col">
        <Header />

        <main className="pt-[58px] pr-[43px] pl-[58px]">
          <TitleRow />

          <div role="tablist" className="mt-[30px] flex h-[75px] gap-[65px] border-b border-[#eff0f2] text-[25px] font-semibold">
            <button type="button" role="tab" aria-selected="true" className="-mb-px border-b-3 border-[#155eef] pt-1 text-[#155eef]">
              Your Business Profile
            </button>
            <button type="button" role="tab" aria-selected="false" className="-mb-px border-b-3 border-transparent pt-1 text-[#101828]">
              Compare Reports
            </button>
          </div>

          <div className="mt-[21px] mr-[18px] flex gap-[33px]">
            <SectionList />
            <div className="min-w-0 flex-1">
              <BusinessMap />
              <OverallScore />
            </div>
          </div>
        </main>
      </div>

      <CalloutArrows />
    </div>
  );
}
